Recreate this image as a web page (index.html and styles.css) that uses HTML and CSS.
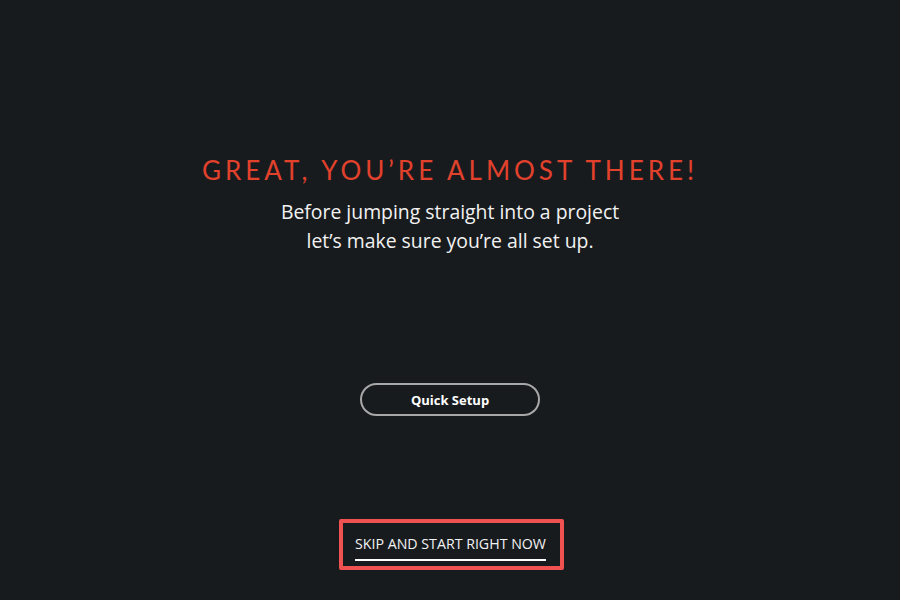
FILE: index.html
```html
<!DOCTYPE html>
<html lang="en">
<head>
    <meta charset="UTF-8">
    <title>Setup</title>
    <link rel="stylesheet" href="styles.css">
</head>
<body>
    <div class="onboarding">
        <div class="intro">
            <h1>Great, you’re almost there!</h1>
            <p>Before jumping straight into a project<br>let’s make sure you’re all set up.</p>
        </div>
        <button class="quick-setup">Quick Setup</button>
        <div class="skip-box">
            <a href="#" class="skip">Skip and start right now</a>
        </div>
    </div>
</body>
</html>
```
FILE: styles.css
```css
html, body {
    margin: 0;
    height: 100%;
}

body {
    background-color: #181b1e;
    font-family: 'Open Sans', sans-serif;
    color: #fff;
}

.onboarding {
    display: flex;
    flex-direction: column;
    align-items: center;
    padding-top: 153px;
}

.intro {
    text-align: center;
}

h1 {
    margin: 0;
    font-family: 'Lato', sans-serif;
    font-weight: 400;
    font-size: 26px;
    line-height: 34px;
    letter-spacing: 4px;
    text-transform: uppercase;
    color: #e2412c;
}

.intro p {
    margin: 10px 0 0;
    font-size: 19.4px;
    line-height: 29px;
    color: #f2f2f2;
}

.quick-setup {
    margin-top: 128px;
    width: 180px;
    height: 33px;
    border: 2px solid #a8a8a8;
    border-radius: 17px;
    background: transparent;
    color: #fff;
    font-family: 'Open Sans', sans-serif;
    font-weight: 700;
    font-size: 13px;
    cursor: pointer;
}

.skip-box {
    margin-top: 103px;
    margin-left: 3px;
    border: 4px solid #f05252;
    border-radius: 2px;
    padding: 9px 14px 5px 12px;
}

.skip {
    display: inline-block;
    color: #f2f2f2;
    text-decoration: none;
    text-transform: uppercase;
    font-size: 14.2px;
    line-height: 20px;
    padding-bottom: 5px;
    border-bottom: 2px solid #fff;
}
```
